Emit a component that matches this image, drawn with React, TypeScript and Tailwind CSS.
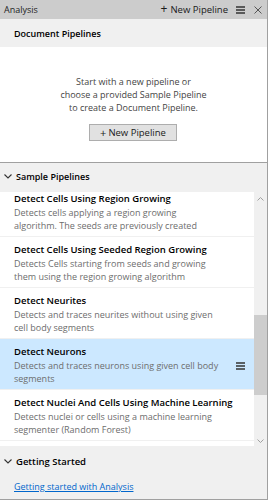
const items = [
  {
    title: "Detect Cells Using Region Growing",
    desc: ["Detects cells applying a region growing", "algorithm. The seeds are previously created"],
  },
  {
    title: "Detect Cells Using Seeded Region Growing",
    desc: ["Detects Cells starting from seeds and growing", "them using the region growing algorithm"],
  },
  {
    title: "Detect Neurites",
    desc: ["Detects and traces neurites without using given", "cell body segments"],
  },
  {
    title: "Detect Neurons",
    desc: ["Detects and traces neurons using given cell body", "segments"],
    selected: true,
  },
  {
    title: "Detect Nuclei And Cells Using Machine Learning",
    desc: ["Detects nuclei or cells using a machine learning", "segmenter (Random Forest)"],
  },
];

function Chevron() {
  return (
    <svg width="8" height="5" viewBox="0 0 8 5" className="shrink-0">
      <path d="M0.5 0.5 L4 4 L7.5 0.5" fill="none" stroke="#333" strokeWidth="1.1" />
    </svg>
  );
}

function Burger() {
  return (
    <svg width="9" height="8" viewBox="0 0 9 8">
      <path d="M0 1h9M0 4h9M0 7h9" stroke="#333" strokeWidth="1.3" />
    </svg>
  );
}

export default function App() {
  return (
    <div className="w-[269px] h-[500px] bg-white text-[9px] leading-[13px] text-[#1a1a1a]" style={{ fontFamily: '"Open Sans", "Noto Sans", sans-serif' }}>
      <div className="w-[268px] h-[500px] flex flex-col border-r border-b border-[#a0a0a0]">
        {/* title bar */}
        <div className="h-[19px] shrink-0 bg-[#cccccc] flex items-center pl-1 pr-[5px]">
          <span className="text-[#1e1e1e]">Analysis</span>
          <div className="ml-auto flex items-center">
            <span className="text-[12px] leading-none mr-[3px] -mt-px">+</span>
            <span className="text-[9.5px]">New Pipeline</span>
            <span className="ml-[8px] flex"><Burger /></span>
            <svg width="8" height="8" viewBox="0 0 8 8" className="ml-[9px]">
              <path d="M0.5 0.5L7.5 7.5M7.5 0.5L0.5 7.5" stroke="#555" strokeWidth="1" />
            </svg>
          </div>
        </div>

        {/* document pipelines */}
        <div className="h-[28px] shrink-0 bg-[#f0f0f0] flex items-center pl-[14px] font-semibold text-black">
          Document Pipelines
        </div>
        <div className="h-[115px] shrink-0 flex flex-col items-center pt-[28px] text-[#444]">
          <div className="text-center">
            <div>Start with a new pipeline or</div>
            <div>choose a provided Sample Pipeline</div>
            <div>to create a Document Pipeline.</div>
          </div>
          <button className="mt-[10px] w-[88px] h-[17px] bg-[#e1e1e1] border border-[#adadad] flex items-center justify-center text-[#1a1a1a] -ml-[1px] text-[9.5px]">
            <span className="text-[11px] leading-none mr-[2px] -mt-px">+</span>New Pipeline
          </button>
        </div>

        {/* sample pipelines */}
        <div className="border-t border-[#a0a0a0] bg-[#f0f0f0] h-[30px] shrink-0 flex items-start pt-[7px] pl-[4px] gap-[4px]">
          <span className="mt-[4px] flex"><Chevron /></span>
          <span className="font-semibold text-black">Sample Pipelines</span>
        </div>
        <div className="h-[254px] shrink-0 flex overflow-hidden">
          <div className="w-[254px] overflow-hidden bg-white">
            <div className="-mt-[6px]">
              {items.map((it) => (
                <div
                  key={it.title}
                  className={`h-[51px] border-b border-[#f0f0f0] pl-[14px] pt-[6px] relative ${it.selected ? "bg-[#cce8ff]" : "bg-white"}`}
                >
                  <div className="font-semibold text-black leading-[14px] text-[9.5px]">{it.title}</div>
                  {it.desc.map((d) => (
                    <div key={d} className="text-[#6d6d6d]">{d}</div>
                  ))}
                  {it.selected && (
                    <span className="absolute left-[236px] top-[23px] flex"><Burger /></span>
                  )}
                </div>
              ))}
            </div>
          </div>
          <div className="w-[13px] bg-[#f0f0f0] flex flex-col items-center pt-[5px]">
            <svg width="7" height="4" viewBox="0 0 7 4">
              <path d="M0.5 3.5L3.5 0.5L6.5 3.5" fill="none" stroke="#a0a0a0" strokeWidth="1" />
            </svg>
            <div className="mt-[114px] w-full h-[80px] bg-[#cdcdcd]" />
            <svg width="7" height="4" viewBox="0 0 7 4" className="mt-[44px]">
              <path d="M0.5 0.5L3.5 3.5L6.5 0.5" fill="none" stroke="#a0a0a0" strokeWidth="1" />
            </svg>
          </div>
        </div>

        {/* getting started */}
        <div className="flex-1 bg-[#f0f0f0] pl-[4px] pt-[9px]">
          <div className="flex items-center gap-[4px]">
            <Chevron />
            <span className="font-semibold text-black text-[9.5px]">Getting Started</span>
          </div>
          <div className="pl-[10px] mt-[12px]">
            <a className="text-[#0066cc] underline">Getting started with Analysis</a>
          </div>
        </div>
      </div>
    </div>
  );
}
